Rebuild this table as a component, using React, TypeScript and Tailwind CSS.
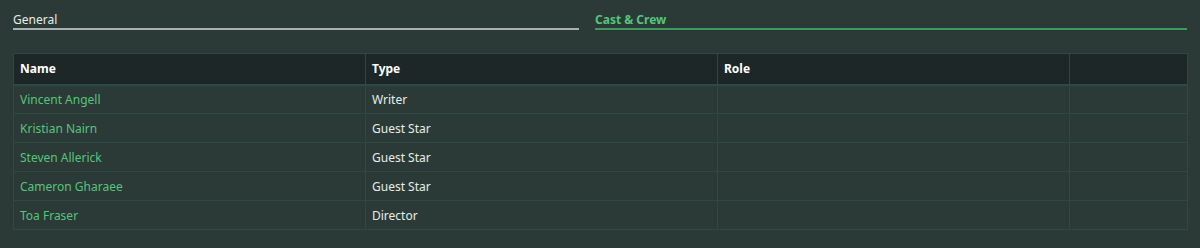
const rows = [
  { name: "Vincent Angell", type: "Writer" },
  { name: "Kristian Nairn", type: "Guest Star" },
  { name: "Steven Allerick", type: "Guest Star" },
  { name: "Cameron Gharaee", type: "Guest Star" },
  { name: "Toa Fraser", type: "Director" },
];

export default function App() {
  return (
    <div className="h-[248px] w-[1200px] bg-[#2b3a37] px-[13px] pt-[12px] text-[12px] text-[#e6ecea] [font-family:'Noto_Sans',sans-serif]">
      <div className="flex gap-[16px] leading-[16px]">
        <div className="w-[566px] border-b-2 border-[#a9b0ae]">General</div>
        <div className="flex-1 border-b-2 border-[#3f9a5f] font-bold text-[#55c47c]">Cast &amp; Crew</div>
      </div>
      <table className="mt-[23px] w-[1174px] table-fixed border-collapse">
        <colgroup>
          <col className="w-[352px]" />
          <col className="w-[352px]" />
          <col className="w-[352px]" />
          <col className="w-[118px]" />
        </colgroup>
        <thead>
          <tr className="h-[31px] bg-[#1d2727] text-left font-bold text-white">
            <th className="border border-b-2 border-[#2e4846] px-[6px]">Name</th>
            <th className="border border-b-2 border-[#2e4846] px-[6px]">Type</th>
            <th className="border border-b-2 border-[#2e4846] px-[6px]">Role</th>
            <th className="border border-b-2 border-[#2e4846] px-[6px]"></th>
          </tr>
        </thead>
        <tbody>
          {rows.map((row) => (
            <tr key={row.name} className="h-[29px]">
              <td className="border border-[#2e4846] px-[6px] pt-[1px] text-[#55c47c]">{row.name}</td>
              <td className="border border-[#2e4846] px-[6px] pt-[1px]">{row.type}</td>
              <td className="border border-[#2e4846] px-[6px]"></td>
              <td className="border border-[#2e4846] px-[6px]"></td>
            </tr>
          ))}
        </tbody>
      </table>
    </div>
  );
}
